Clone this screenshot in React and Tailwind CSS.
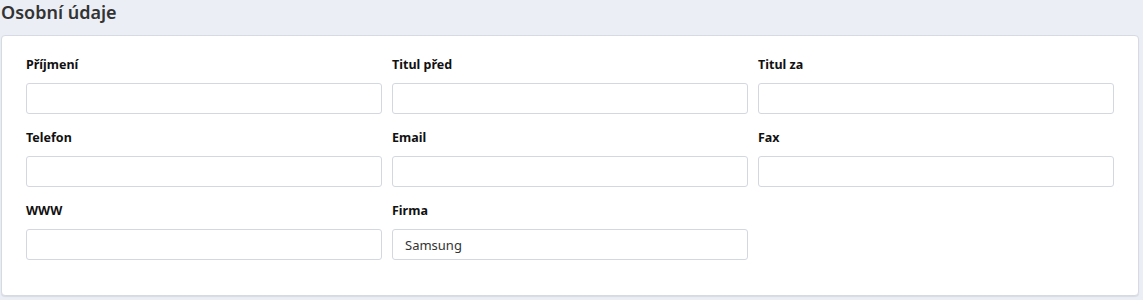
import React from 'react';

const fields = [
  { label: 'Příjmení', value: '' },
  { label: 'Titul před', value: '' },
  { label: 'Titul za', value: '' },
  { label: 'Telefon', value: '' },
  { label: 'Email', value: '' },
  { label: 'Fax', value: '' },
  { label: 'WWW', value: '' },
  { label: 'Firma', value: 'Samsung' },
];

const Field = ({ label, value }) => (
  <div className="flex flex-col">
    <label className="h-[29px] pt-[2px] text-[12.5px] font-bold leading-[18px] text-[#111]">{label}</label>
    <input
      type="text"
      defaultValue={value}
      className="h-[31px] w-full rounded-[3px] border border-[#d3d7df] bg-white px-[12px] text-[13px] text-[#333] outline-none"
    />
  </div>
);

const App = () => {
  return (
    <div className="h-[300px] w-[1143px] bg-[#ebeef5] pl-px pr-[4px] font-['Noto_Sans',sans-serif]">
      <h2 className="h-[35px] text-[18px] font-semibold leading-[24px] text-[#333]">Osobní údaje</h2>
      <div className="h-[261px] rounded-[4px] border border-[#d6dae2] bg-white px-[24px] pt-[18px] shadow-[0_1px_1px_rgba(0,0,0,0.08)]">
        <div className="grid grid-cols-3 gap-x-[10px] gap-y-[13px]">
          {fields.map((f) => (
            <Field key={f.label} label={f.label} value={f.value} />
          ))}
        </div>
      </div>
    </div>
  );
};

export default App;
